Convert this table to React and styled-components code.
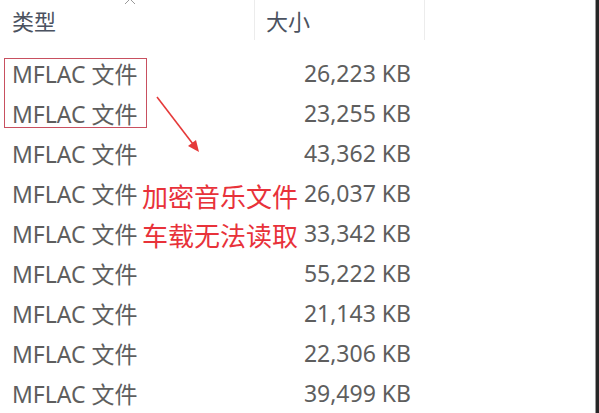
import React from 'react';
import styled, { createGlobalStyle } from 'styled-components';

const GlobalStyle = createGlobalStyle`
  html, body {
    margin: 0;
    padding: 0;
    background: #ffffff;
  }
  body {
    font-family: "Noto Sans", "Noto Sans CJK SC", sans-serif;
  }
`;

const Window = styled.div`
  position: relative;
  display: flex;
  width: 599px;
  height: 413px;
  overflow: hidden;
  background: #fff;
`;

const Pane = styled.div`
  flex: 1;
  display: flex;
  flex-direction: column;
`;

const EdgeBar = styled.div`
  width: 3px;
  background: #262626;
  border-left: 1px solid #9a9a9a;
`;

const HeaderRow = styled.div`
  position: relative;
  display: flex;
  height: 44px;
`;

const HeaderCell = styled.div`
  width: ${p => p.width}px;
  box-sizing: border-box;
  padding-left: ${p => p.pad}px;
  padding-top: 4px;
  border-right: ${p => (p.divider ? '1px solid #ececec' : 'none')};
  font-size: 22px;
  line-height: 32px;
  color: #4b5260;
  font-family: "Noto Sans CJK SC", sans-serif;
`;

const SortCaret = styled.svg`
  position: absolute;
  left: 124px;
  top: -3px;
`;

const List = styled.div`
  display: flex;
  flex-direction: column;
  padding-top: 13px;
`;

const Row = styled.div`
  display: flex;
  align-items: center;
  height: 40px;
  font-size: 23px;
  color: #5e5e5e;
`;

const TypeCell = styled.div`
  width: 255px;
  box-sizing: border-box;
  padding-left: 12px;
`;

const SizeCell = styled.div`
  width: 156px;
  text-align: right;
`;

const HighlightBox = styled.div`
  position: absolute;
  left: 4px;
  top: 58px;
  width: 143px;
  height: 70px;
  border: 1px solid #c85060;
  box-sizing: border-box;
`;

const Arrow = styled.svg`
  position: absolute;
  left: 150px;
  top: 90px;
`;

const Note = styled.div`
  position: absolute;
  left: 142px;
  top: 176px;
  display: flex;
  flex-direction: column;
  font-family: "Noto Sans CJK SC", sans-serif;
  font-size: 26px;
  line-height: 39px;
  color: #e8323a;
  background: rgba(255, 255, 255, 0.6);
`;

const sizes = [
  '26,223 KB',
  '23,255 KB',
  '43,362 KB',
  '26,037 KB',
  '33,342 KB',
  '55,222 KB',
  '21,143 KB',
  '22,306 KB',
  '39,499 KB',
];

const App = () => {
  return (
    <>
      <GlobalStyle />
      <Window>
        <Pane>
          <HeaderRow>
            <HeaderCell width={255} pad={12} divider>类型</HeaderCell>
            <HeaderCell width={170} pad={11} divider>大小</HeaderCell>
            <SortCaret width="12" height="8" viewBox="0 0 12 8">
              <path d="M1 7 L6 2 L11 7" fill="none" stroke="#9a9a9a" strokeWidth="1" />
            </SortCaret>
          </HeaderRow>
          <List>
            {sizes.map((size, i) => (
              <Row key={i}>
                <TypeCell>MFLAC 文件</TypeCell>
                <SizeCell>{size}</SizeCell>
              </Row>
            ))}
          </List>
        </Pane>
        <EdgeBar />
        <HighlightBox />
        <Arrow width="60" height="70" viewBox="0 0 60 70">
          <line x1="7" y1="7" x2="46" y2="58" stroke="#e53a3a" strokeWidth="1.6" />
          <path d="M49 62 L38 56 L46 50 Z" fill="#e53a3a" />
        </Arrow>
        <Note>
          <span>加密音乐文件</span>
          <span>车载无法读取</span>
        </Note>
      </Window>
    </>
  );
};

export default App;
